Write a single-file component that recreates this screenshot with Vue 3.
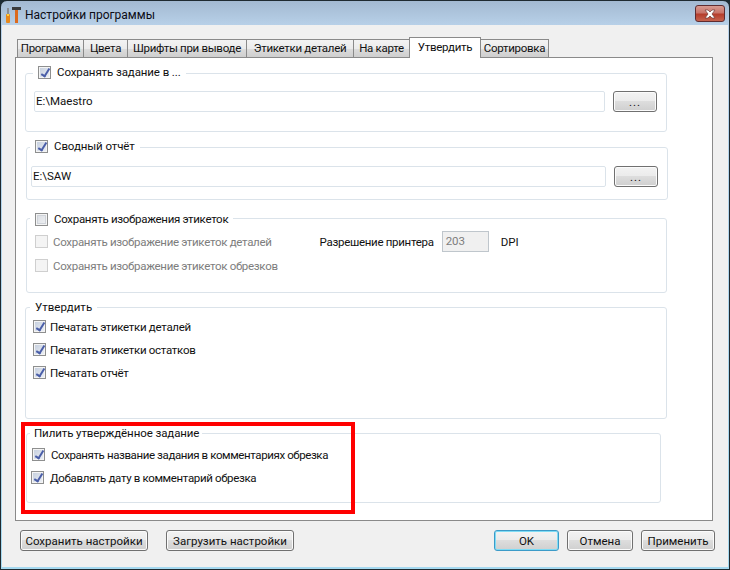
<script setup>
const tabs = [
  { label: 'Программа', w: 67 },
  { label: 'Цвета', w: 45 },
  { label: 'Шрифты при выводе', w: 120 },
  { label: 'Этикетки деталей', w: 108 },
  { label: 'На карте', w: 57 },
  { label: 'Утвердить', w: 72, active: true },
  { label: 'Сортировка', w: 69 }
]
</script>

<template>
  <div class="window">
    <header class="titlebar">
      <svg class="appicon" width="18" height="18" viewBox="0 0 18 18">
        <rect x="0" y="8" width="4" height="9" rx="1" fill="#e8891c" />
        <rect x="1" y="2" width="2" height="6" fill="#8a8f96" />
        <rect x="1" y="8" width="2" height="2" fill="#ffd23a" />
        <rect x="6" y="1" width="9" height="3" fill="#3b3b3b" />
        <rect x="9" y="4" width="3" height="13" fill="#dc6a1e" />
      </svg>
      <span class="title">Настройки программы</span>
      <button class="close">
        <svg width="14" height="10" viewBox="0 0 14 10">
          <path d="M2 1h3l2 2 2-2h3L9 5l3 4H9L7 7 5 9H2l3-4z" fill="#fff" stroke="#6d3a38" stroke-width=".7" />
        </svg>
      </button>
    </header>

    <div class="client">
      <nav class="tabs">
        <div v-for="t in tabs" :key="t.label" class="tab" :class="{ active: t.active }" :style="{ width: t.w + 'px' }">{{ t.label }}</div>
      </nav>

      <section class="panel">
        <div class="group g1">
          <div class="legend leg1"><span class="cb on"></span><span>Сохранять задание в ...</span></div>
          <div class="pathrow r1">
            <div class="input">E:\Maestro</div>
            <button class="btn dots">...</button>
          </div>
        </div>

        <div class="group g2">
          <div class="legend leg2"><span class="cb on"></span><span>Сводный отчёт</span></div>
          <div class="pathrow r2">
            <div class="input">E:\SAW</div>
            <button class="btn dots">...</button>
          </div>
        </div>

        <div class="group g3">
          <div class="legend leg3"><span class="cb"></span><span>Сохранять изображения этикеток</span></div>
          <div class="row dis first3">
            <span class="cb off"></span>
            <span class="lbl">Сохранять изображение этикеток деталей</span>
            <span class="dpi-label">Разрешение принтера</span>
            <span class="dpi-box">203</span>
            <span class="dpi-unit">DPI</span>
          </div>
          <div class="row dis"><span class="cb off"></span><span class="lbl">Сохранять изображение этикеток обрезков</span></div>
        </div>

        <div class="group g4">
          <div class="legend leg4"><span>Утвердить</span></div>
          <div class="row first4"><span class="cb on"></span><span class="lbl">Печатать этикетки деталей</span></div>
          <div class="row r4"><span class="cb on"></span><span class="lbl">Печатать этикетки остатков</span></div>
          <div class="row r4"><span class="cb on"></span><span class="lbl">Печатать отчёт</span></div>
        </div>

        <div class="group g5">
          <div class="legend leg5"><span>Пилить утверждённое задание</span></div>
          <div class="row first5"><span class="cb on"></span><span class="lbl">Сохранять название задания в комментариях обрезка</span></div>
          <div class="row second5"><span class="cb on"></span><span class="lbl">Добавлять дату в комментарий обрезка</span></div>
        </div>
      </section>

      <footer class="actions">
        <button class="btn save">Сохранить настройки</button>
        <button class="btn load">Загрузить настройки</button>
        <span class="spacer"></span>
        <button class="btn ok">OK</button>
        <button class="btn cancel">Отмена</button>
        <button class="btn apply">Применить</button>
      </footer>
    </div>

    <div class="highlight"></div>
  </div>
</template>

<style>
html, body { margin: 0; background: #1c2b33; }
</style>

<style scoped>
.window {
  position: relative;
  box-sizing: border-box;
  width: 730px;
  height: 570px;
  overflow: hidden;
  display: flex;
  flex-direction: column;
  padding: 0 1px 2px;
  border: 1px solid #1f2a30;
  border-radius: 7px 7px 0 0;
  background: linear-gradient(180deg, #a3b9d1 0, #b9d2ea 26px, #a5d9f0 100%);
  font-family: Roboto, "Liberation Sans", sans-serif;
  font-size: 11.5px;
  letter-spacing: -.3px;
  color: #111;
}
.titlebar { height: 24px; flex: none; display: flex; align-items: center; position: relative; }
.appicon { margin-left: 4px; margin-top: 4px; }
.title { margin-left: 1px; margin-top: 4px; color: #0c0c14; font-size: 12px; letter-spacing: 0; }
.close {
  position: absolute; right: 3px; top: 4px; width: 30px; height: 17px; padding: 0;
  border: 1px solid #5f2c30; border-radius: 3px;
  background: linear-gradient(180deg, #d89a90 0, #c8746a 45%, #b53d2c 55%, #c6634f 100%);
  display: flex; align-items: center; justify-content: center;
}
.client { flex: 1; background: #f0f0f0; padding: 12px 0 0 13px; display: flex; flex-direction: column; min-height: 0; }
.tabs { display: flex; height: 20px; padding-left: 2px; flex: none; position: relative; z-index: 1; }
.tab {
  box-sizing: border-box; height: 19px; margin-top: 2px; margin-right: -1px; text-align: center; line-height: 17px;
  border: 1px solid #8a8a8a;
  background: linear-gradient(180deg, #f3f3f3 0, #ebebeb 50%, #dcdcdc 51%, #cfcfcf 100%);
  white-space: nowrap;
}
.tab.active { background: #fff; border-bottom: 0; height: 21px; margin-top: 0; line-height: 18px; position: relative; z-index: 2; }
.panel { box-sizing: border-box; width: 698px; height: 464px; flex: none; background: #fff; border: 1px solid #8a8a8a; }
.group { box-sizing: border-box; border: 1px solid #dbe3ea; border-radius: 3px; position: relative; }
.legend { position: absolute; height: 15px; background: #fff; display: flex; align-items: center; gap: 6px; padding: 0 5px; white-space: nowrap; line-height: 15px; }

.g1 { margin: 15px 0 0 9px; width: 642px; height: 59px; }
.leg1 { left: 7px; top: -12px; height: 20px; letter-spacing: -.1px; }
.g2 { margin: 15px 0 0 10px; width: 642px; height: 53px; }
.leg2 { left: 3px; top: -9px; letter-spacing: -.1px; }
.g3 { margin: 18px 0 0 10px; width: 641px; height: 75px; }
.leg3 { left: 3px; top: -7px; }
.g4 { margin: 14px 0 0 9px; width: 642px; height: 112px; }
.leg4 { left: 4px; top: -8px; letter-spacing: 0; }
.g5 { margin: 14px 0 0 10px; width: 635px; height: 70px; }
.leg5 { left: 3px; top: -8px; padding: 0 3px 0 4px; letter-spacing: -.1px; }

.pathrow { display: flex; align-items: center; gap: 8px; }
.r1 { margin: 17px 0 0 8px; }
.r2 { margin: 18px 0 0 4px; }
.input { box-sizing: border-box; height: 21px; border: 1px solid #dbe3ea; border-radius: 2px; line-height: 19px; padding-left: 1px; background: #fff; letter-spacing: 0; }
.r1 .input { width: 571px; }
.r2 .input { width: 575px; }
.btn {
  box-sizing: border-box; height: 21px; padding: 0; margin: 0; font: inherit; color: #111;
  border: 1px solid #707070; border-radius: 3px;
  background: linear-gradient(180deg, #f3f3f3 0, #ebebeb 49%, #dddddd 50%, #cfcfcf 100%);
  box-shadow: inset 0 0 0 1px #fbfbfb;
  white-space: nowrap;
  letter-spacing: 0;
}
.dots { width: 44px; line-height: 14px; letter-spacing: 1px; }

.cb {
  box-sizing: border-box; width: 13px; height: 13px; flex: none; position: relative; display: inline-block;
  border: 1px solid #8e8f8f;
  background: linear-gradient(135deg, #d8dce2 0, #f0f1f3 100%);
  box-shadow: inset 0 0 0 1px #f4f4f4, inset 0 0 0 2px #cfd3d9;
}
.cb.on { background: linear-gradient(135deg, #c3cddd 0, #eef1f6 100%); box-shadow: inset 0 0 0 1px #f4f4f4; }
.cb.on::after {
  content: ""; position: absolute; left: 4px; top: 0; width: 3px; height: 8px;
  border: solid #4a5ea8; border-width: 0 2px 2px 0; transform: rotate(32deg);
}
.cb.off { border-color: #cfcfcf; background: #f4f4f4; box-shadow: none; }

.row { display: flex; align-items: center; gap: 5px; height: 15px; margin: 9px 0 0 8px; white-space: nowrap; }
.dis .lbl { color: #7d7d7d; }
.first3 { margin-top: 15px; }
.first4 { margin-top: 11px; margin-left: 7px; gap: 4px; }
.r4 { margin-left: 7px; gap: 4px; margin-top: 8px; }
.first5 { margin-top: 13px; margin-left: 5px; gap: 6px; }
.second5 { margin-top: 8px; margin-left: 4px; gap: 6px; }
.first5 .lbl { letter-spacing: -.4px; }
.second5 .lbl { letter-spacing: -.35px; }
.dpi-label { margin-left: 43px; letter-spacing: -.3px; }
.dpi-box { box-sizing: border-box; width: 47px; height: 21px; margin-left: 3px; border: 1px solid #bfc6cc; background: #f0f0f0; color: #7d7d7d; line-height: 19px; padding-left: 3px; letter-spacing: 0; }
.dpi-unit { margin-left: 7px; letter-spacing: 0; }

.actions { display: flex; height: 21px; margin-top: 9px; padding-left: 5px; flex: none; }
.spacer { flex: 1; }
.save { width: 128px; }
.load { width: 128px; margin-left: 18px; }
.ok { width: 65px; border-color: #3c9bc8; box-shadow: inset 0 0 0 1px #7fdcf5; }
.cancel { width: 66px; margin-left: 8px; }
.apply { width: 74px; margin-left: 8px; margin-right: 13px; }

.highlight { position: absolute; left: 20px; top: 421px; width: 334px; height: 92px; box-sizing: border-box; border: 4px solid #f00; pointer-events: none; }
</style>
